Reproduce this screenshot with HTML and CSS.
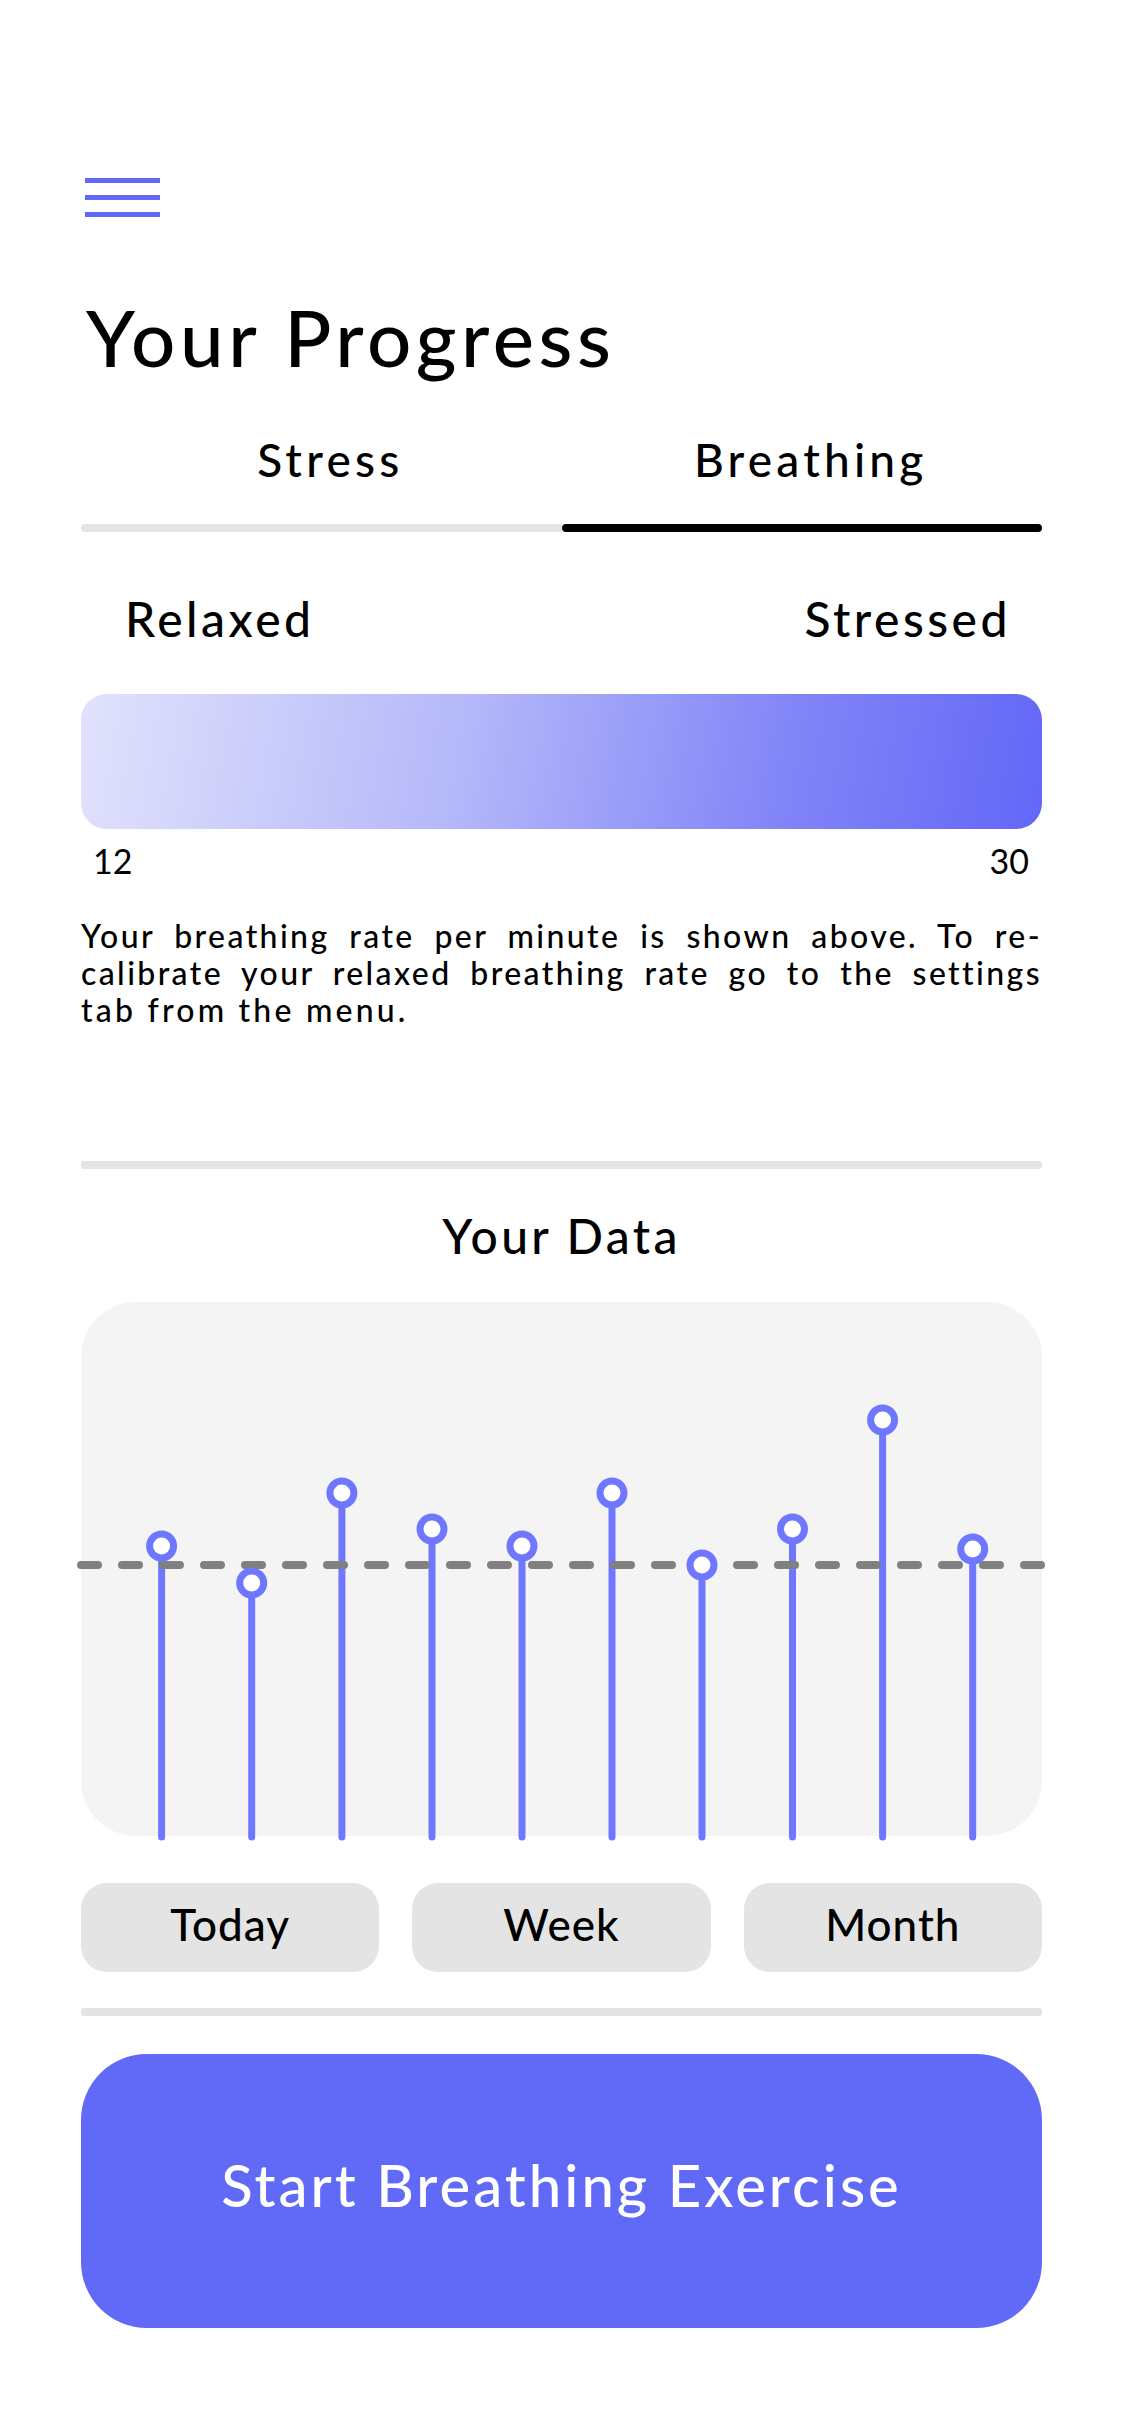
FILE: index.html
```html
<!DOCTYPE html>
<html lang="en">
<head>
<meta charset="utf-8">
<title>Your Progress</title>
<link rel="stylesheet" href="styles.css">
</head>
<body>
<main class="page">
  <div class="menu" aria-label="Menu">
    <span class="menu-bar"></span>
    <span class="menu-bar"></span>
    <span class="menu-bar"></span>
  </div>

  <h1 class="title">Your Progress</h1>

  <nav class="tabs">
    <div class="tab">Stress</div>
    <div class="tab">Breathing</div>
  </nav>
  <div class="tab-track">
    <span class="tab-line"></span>
    <span class="tab-line active"></span>
  </div>

  <div class="range-labels">
    <span>Relaxed</span>
    <span>Stressed</span>
  </div>
  <div class="gradient-bar"></div>
  <div class="scale">
    <span>12</span>
    <span>30</span>
  </div>

  <p class="info">
    <span class="line full">Your breathing rate per minute is shown above. To re-</span>
    <span class="line full">calibrate your relaxed breathing rate go to the settings</span>
    <span class="line">tab from the menu.</span>
  </p>

  <hr class="divider first">

  <h2 class="section-title">Your Data</h2>

  <div class="chart-card">
    <svg class="chart" viewBox="0 0 961 534" width="961" height="534">
      <g class="stems">
        <line x1="80.6" y1="244" x2="80.6" y2="535"/>
        <line x1="170.7" y1="281" x2="170.7" y2="535"/>
        <line x1="260.9" y1="191" x2="260.9" y2="535"/>
        <line x1="351" y1="227" x2="351" y2="535"/>
        <line x1="441" y1="244" x2="441" y2="535"/>
        <line x1="531" y1="191" x2="531" y2="535"/>
        <line x1="621" y1="263" x2="621" y2="535"/>
        <line x1="711.5" y1="227" x2="711.5" y2="535"/>
        <line x1="801.6" y1="118" x2="801.6" y2="535"/>
        <line x1="891.7" y1="247" x2="891.7" y2="535"/>
      </g>
      <line class="baseline" x1="0" y1="263" x2="962" y2="263"/>
      <g class="dots">
        <circle cx="80.6" cy="244" r="12"/>
        <circle cx="170.7" cy="281" r="12"/>
        <circle cx="260.9" cy="191" r="12"/>
        <circle cx="351" cy="227" r="12"/>
        <circle cx="441" cy="244" r="12"/>
        <circle cx="531" cy="191" r="12"/>
        <circle cx="621" cy="263" r="12"/>
        <circle cx="711.5" cy="227" r="12"/>
        <circle cx="801.6" cy="118" r="12"/>
        <circle cx="891.7" cy="247" r="12"/>
      </g>
    </svg>
  </div>

  <div class="periods">
    <button class="period">Today</button>
    <button class="period">Week</button>
    <button class="period">Month</button>
  </div>

  <hr class="divider second">

  <button class="start">Start Breathing Exercise</button>
</main>
</body>
</html>
```

FILE: styles.css
```css
* {
  box-sizing: border-box;
}

html, body {
  margin: 0;
  padding: 0;
  background: #ffffff;
}

body {
  font-family: "Lato", "Open Sans", "Liberation Sans", sans-serif;
  font-weight: 500;
  color: #000000;
}

.page {
  width: 1125px;
  padding: 178px 83px 0 81px;
  display: flex;
  flex-direction: column;
}

.menu {
  display: flex;
  flex-direction: column;
  gap: 12px;
  width: 75px;
  margin-left: 4px;
}

.menu-bar {
  display: block;
  height: 5px;
  background: #6468f6;
}

.title {
  margin: 75px 0 0 5px;
  font-size: 78px;
  line-height: 90px;
  font-weight: 500;
  letter-spacing: 4.6px;
}

.tabs {
  display: flex;
  margin-top: 48px;
  height: 60px;
}

.tab {
  flex: 1;
  text-align: center;
  padding-left: 18px;
  font-size: 46px;
  line-height: 60px;
  letter-spacing: 4.2px;
}

.tab-track {
  display: flex;
  margin-top: 34px;
  height: 8px;
}

.tab-line {
  flex: 1;
  height: 8px;
  background: #e4e4e4;
  border-radius: 4px 0 0 4px;
}

.tab-line.active {
  background: #000000;
  border-radius: 4px;
}

.range-labels {
  display: flex;
  justify-content: space-between;
  margin-top: 57px;
  padding: 0 31px 0 44px;
  font-size: 48px;
  line-height: 60px;
  letter-spacing: 3.5px;
}

.gradient-bar {
  margin-top: 45px;
  height: 135px;
  border-radius: 26px;
  background: linear-gradient(100deg, #e1e2fc 0%, #b4b7f9 40%, #8386f7 72%, #6367f7 100%);
}

.scale {
  display: flex;
  justify-content: space-between;
  margin-top: 12px;
  padding: 0 13px 0 12px;
  font-size: 34px;
  line-height: 40px;
  font-weight: 400;
}

.info {
  margin: 36px 0 0 0;
  font-size: 32px;
  line-height: 37px;
  letter-spacing: 3.2px;
}

.info .line {
  display: block;
  text-align: left;
}

.info .line.full {
  text-align: justify;
  text-align-last: justify;
  letter-spacing: 2.4px;
}

.divider {
  border: none;
  height: 8px;
  margin: 0;
  background: #e4e4e4;
  border-radius: 3px;
}

.divider.first {
  margin-top: 133px;
}

.section-title {
  margin: 37px 0 0 0;
  text-align: center;
  font-size: 48px;
  line-height: 60px;
  font-weight: 500;
  letter-spacing: 3.3px;
}

.chart-card {
  margin-top: 36px;
  height: 534px;
  border-radius: 55px;
  background: #f4f4f4;
}

.chart {
  display: block;
  overflow: visible;
}

.stems line {
  stroke: #6e77fe;
  stroke-width: 7;
  stroke-linecap: round;
}

.baseline {
  stroke: #808080;
  stroke-width: 8;
  stroke-linecap: round;
  stroke-dasharray: 17 24;
}

.dots circle {
  fill: #ffffff;
  stroke: #6e77fe;
  stroke-width: 7;
}

.periods {
  display: grid;
  grid-template-columns: repeat(3, 1fr);
  gap: 33px;
  margin-top: 47px;
}

.period {
  height: 89px;
  border: none;
  border-radius: 26px;
  background: #e4e4e4;
  font-family: inherit;
  font-weight: 500;
  font-size: 44px;
  letter-spacing: 1px;
  color: #000000;
  padding: 0 0 8px 0;
}

.divider.second {
  margin-top: 36px;
}

.start {
  margin-top: 38px;
  height: 274px;
  border: none;
  border-radius: 66px;
  background: #6169f7;
  color: #ffffff;
  font-family: inherit;
  font-weight: 500;
  font-size: 58px;
  letter-spacing: 3px;
  padding: 0 0 14px 0;
}
```
